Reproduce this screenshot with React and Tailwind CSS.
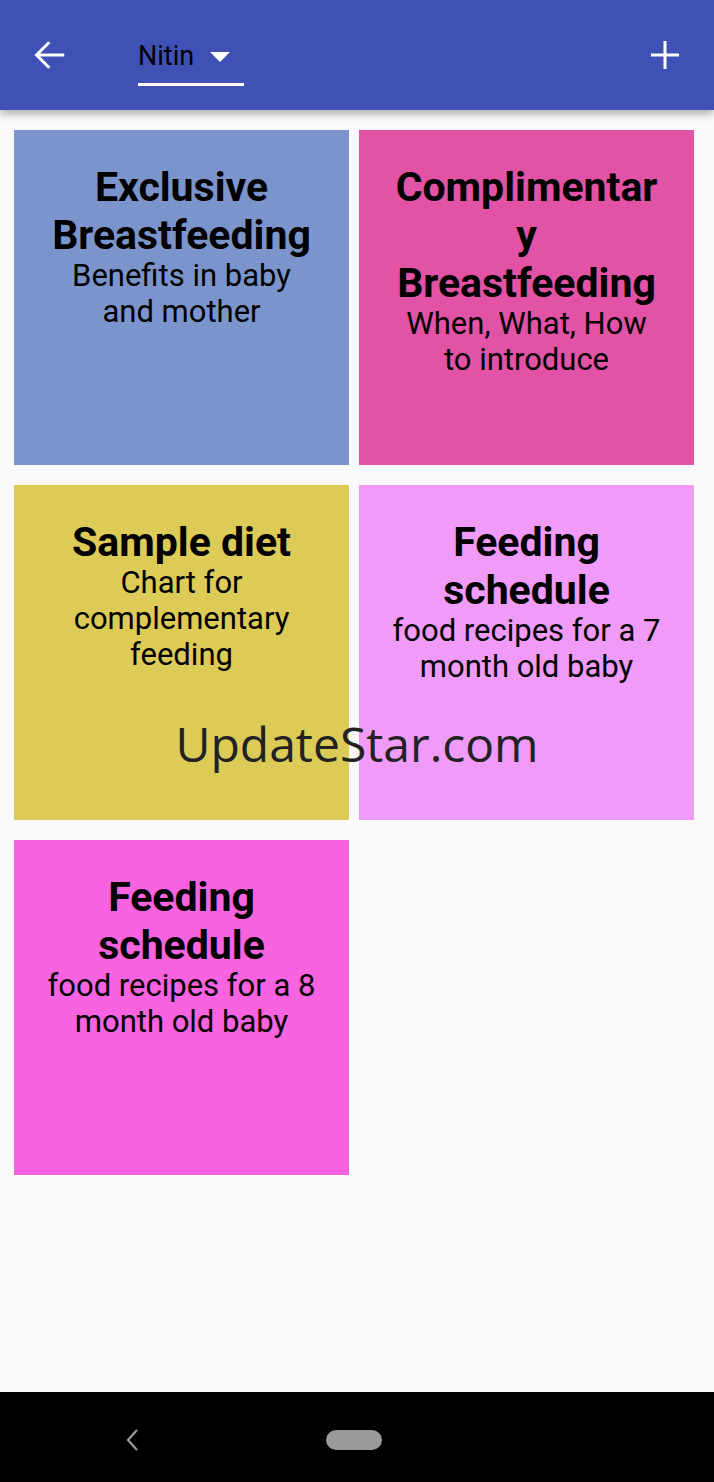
import React from 'react';

const cards = [
    {title: 'Exclusive Breastfeeding', sub: 'Benefits in baby and mother', bg: 'bg-[#7b95cc]'},
    {title: 'Complimentary Breastfeeding', sub: 'When, What, How to introduce', bg: 'bg-[#e252a5]'},
    {title: 'Sample diet', sub: 'Chart for complementary feeding', bg: 'bg-[#dccb57]'},
    {title: 'Feeding schedule', sub: 'food recipes for a 7 month old baby', bg: 'bg-[#ef9bf7]'},
    {title: 'Feeding schedule', sub: 'food recipes for a 8 month old baby', bg: 'bg-[#f963df]'},
];

const App = () => {
    return (
        <div className="relative w-[714px] h-[1482px] flex flex-col bg-[#fafafa] overflow-hidden font-['Roboto',sans-serif]">
            {/* App bar */}
            <header className="h-[110px] shrink-0 bg-[#3f51b5] flex items-center pl-[32px] pr-[34px] shadow-[0_4px_8px_rgba(0,0,0,0.3)] z-10">
                <svg width="36" height="36" viewBox="0 0 24 24" fill="none" stroke="white" strokeWidth="2">
                    <path d="M21.5 12H3M11.5 3.5 3 12l8.5 8.5"/>
                </svg>
                <div className="ml-[70px] flex flex-col mt-[12px]">
                    <div className="flex items-center h-[40px]">
                        <span className="text-[27px] text-black">Nitin</span>
                        <svg className="ml-[16px]" width="20" height="10" viewBox="0 0 20 10">
                            <path d="M0 0h20L10 10z" fill="white"/>
                        </svg>
                    </div>
                    <div className="w-[106px] h-[3px] bg-white mt-[6px]"/>
                </div>
                <div className="flex-1"/>
                <svg width="30" height="30" viewBox="0 0 30 30" stroke="white" strokeWidth="3">
                    <path d="M15 1v28M1 15h28"/>
                </svg>
            </header>

            {/* Cards */}
            <main className="flex-1 pt-[20px] px-[14px]">
                <div className="grid grid-cols-[335px_335px] gap-x-[10px] gap-y-[20px]">
                    {cards.map((c, i) => (
                        <div key={i}
                             className={`${c.bg} h-[335px] px-[32px] pt-[33px] flex flex-col items-center text-center text-black`}>
                            <h2 className="text-[41px] leading-[48px] font-bold [overflow-wrap:anywhere]">{c.title}</h2>
                            <p className="text-[31px] leading-[36px] -mt-[1px]">{c.sub}</p>
                        </div>
                    ))}
                </div>
            </main>

            {/* Watermark */}
            <div className="absolute left-0 right-0 top-[708px] text-center text-[48px] text-[#222222] font-['Open_Sans',sans-serif] pointer-events-none">
                UpdateStar.com
            </div>

            {/* System nav bar */}
            <div className="h-[90px] shrink-0 bg-black relative flex items-center pt-[6px]">
                <svg className="absolute left-[125px]" width="14" height="24" viewBox="0 0 14 24" fill="none" stroke="#9a9a9a" strokeWidth="2.2">
                    <path d="M12 2 3 12l9 10"/>
                </svg>
                <div className="absolute left-[326px] w-[56px] h-[20px] rounded-full bg-[#9a9a9a]"/>
            </div>
        </div>
    );
};

export default App;
